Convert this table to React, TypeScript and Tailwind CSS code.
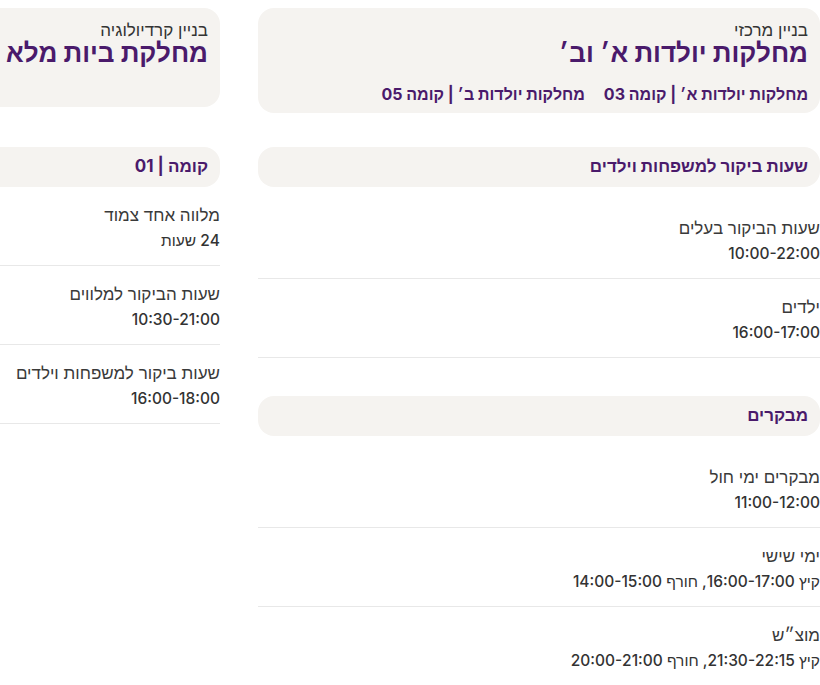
import React from 'react';

type Row = { label: string; value: string };
type Section = { title: string; rows: Row[] };
type Column = {
  building: string;
  title: string;
  links: string[];
  sections: Section[];
};

const columns: Column[] = [
  {
    building: 'בניין מרכזי',
    title: 'מחלקות יולדות א׳ וב׳',
    links: ['מחלקות יולדות א׳ | קומה 03', 'מחלקות יולדות ב׳ | קומה 05'],
    sections: [
      {
        title: 'שעות ביקור למשפחות וילדים',
        rows: [
          { label: 'שעות הביקור בעלים', value: '10:00-22:00' },
          { label: 'ילדים', value: '16:00-17:00' },
        ],
      },
      {
        title: 'מבקרים',
        rows: [
          { label: 'מבקרים ימי חול', value: '11:00-12:00' },
          { label: 'ימי שישי', value: 'קיץ 16:00-17:00, חורף 14:00-15:00' },
          { label: 'מוצ״ש', value: 'קיץ 21:30-22:15, חורף 20:00-21:00' },
        ],
      },
    ],
  },
  {
    building: 'בניין קרדיולוגיה',
    title: 'מחלקת ביות מלא',
    links: [],
    sections: [
      {
        title: 'קומה | 01',
        rows: [
          { label: 'מלווה אחד צמוד', value: '24 שעות' },
          { label: 'שעות הביקור למלווים', value: '10:30-21:00' },
          { label: 'שעות ביקור למשפחות וילדים', value: '16:00-18:00' },
        ],
      },
    ],
  },
];

const SectionBlock: React.FC<{ section: Section; first: boolean; withLinks: boolean }> = ({ section, first, withLinks }) => (
  <div className={first ? (withLinks ? 'mt-[34px]' : 'mt-[40px]') : 'mt-[38px]'}>
    <div className="h-[40px] rounded-2xl bg-[#f5f3f0] px-3 flex items-center">
      <h3 className="text-[17px] font-bold text-[#4a1a6b] whitespace-nowrap">{section.title}</h3>
    </div>
    <div className={withLinks ? 'mt-[13px]' : ''}>
      {section.rows.map(row => (
        <div key={row.label} className="pt-[15px] pb-[11px] border-b border-[#e8e8e8]">
          <div className="text-[17px] leading-[26px] text-[#3a3a3a] whitespace-nowrap">{row.label}</div>
          <div className="text-[15.5px] leading-[26px] font-medium text-[#333] whitespace-nowrap">{row.value}</div>
        </div>
      ))}
    </div>
  </div>
);

export default function App() {
  return (
    <div dir="rtl" className="w-[820px] h-[685px] overflow-hidden bg-white font-['Inter','Liberation_Sans',sans-serif]">
      <div className="flex gap-[38px] pt-2">
        {columns.map(col => {
          const withLinks = col.links.length > 0;
          return (
            <div key={col.title} className="w-[562px] shrink-0">
              <div className={`rounded-2xl bg-[#f5f3f0] px-3 pt-[13px] ${withLinks ? 'h-[105px]' : 'h-[99px]'}`}>
                <div className="text-[17px] leading-[18px] text-[#333] whitespace-nowrap">{col.building}</div>
                <h1 className="text-[26px] leading-[28px] font-bold text-[#4a1a6b] whitespace-nowrap">{col.title}</h1>
                {withLinks && (
                  <div className="mt-[17px] flex gap-[19px]">
                    {col.links.map(link => (
                      <span key={link} className="text-[16px] leading-[20px] font-bold text-[#4a1a6b] whitespace-nowrap">{link}</span>
                    ))}
                  </div>
                )}
              </div>
              {col.sections.map((section, i) => (
                <SectionBlock key={section.title} section={section} first={i === 0} withLinks={withLinks} />
              ))}
            </div>
          );
        })}
      </div>
    </div>
  );
}
